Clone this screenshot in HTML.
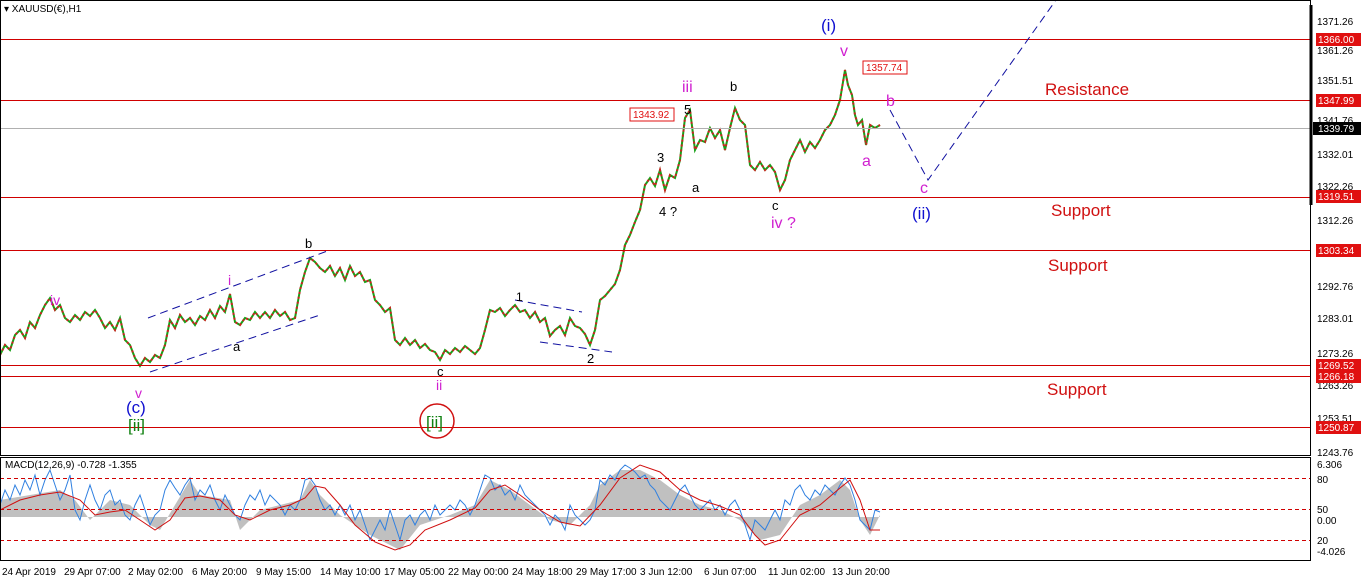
<!DOCTYPE html>
<html><head><meta charset="utf-8"><style>
html,body{margin:0;padding:0;background:#fff;width:1362px;height:582px;overflow:hidden}
svg{display:block;font-family:"Liberation Sans",sans-serif}
</style></head><body>
<svg width="1362" height="582" xmlns="http://www.w3.org/2000/svg">
<rect width="1362" height="582" fill="#fff"/>
<defs>
<polyline id="pr" fill="none" points="0,355 5,345 10,350 15,335 20,330 25,338 30,322 35,328 40,315 45,305 50,298 55,310 60,305 65,318 70,322 75,315 80,320 85,312 90,316 95,310 100,318 105,328 110,322 115,330 120,318 125,340 130,345 135,358 140,366 145,358 150,362 155,355 160,358 165,345 170,320 175,328 180,315 185,322 190,318 195,325 200,316 205,320 210,310 215,318 220,306 225,312 230,294 235,322 240,325 245,318 250,320 255,312 260,318 265,312 270,318 275,310 280,316 285,312 290,320 295,318 300,290 305,272 310,258 315,262 320,268 325,272 330,266 335,276 340,268 345,280 350,266 355,276 360,272 365,282 370,280 375,300 380,305 385,312 390,308 395,340 400,345 405,338 410,345 415,340 420,348 425,344 430,350 435,352 440,360 445,350 450,354 455,348 460,352 465,346 470,350 475,354 480,348 485,330 490,310 495,312 500,308 505,316 510,310 515,305 520,312 525,310 530,318 535,312 540,322 545,318 550,336 555,330 560,326 565,335 570,318 575,326 580,328 585,334 590,345 595,330 600,300 605,296 610,290 615,284 620,270 625,245 630,235 635,222 640,210 645,185 650,178 655,186 660,170 665,190 670,175 675,178 680,160 685,118 690,110 695,150 700,140 705,142 710,128 715,138 720,130 725,150 730,128 735,108 740,120 745,125 750,165 755,170 760,162 765,170 770,165 775,172 780,190 785,180 790,160 795,150 800,140 805,152 810,142 815,148 820,140 825,130 830,125 835,115 840,100 845,70 848,85 852,95 855,115 858,125 862,120 866,145 870,125 875,128 880,125"/>
</defs>
<use href="#pr" stroke="#18a018" stroke-width="2"/>
<use href="#pr" stroke="#d02020" stroke-width="2" stroke-dasharray="2,3"/>
<g fill="#d00000">
<rect x="0" y="39" width="1311" height="1"/><rect x="0" y="100" width="1311" height="1"/>
<rect x="0" y="197" width="1311" height="1"/><rect x="0" y="250" width="1311" height="1"/>
<rect x="0" y="365" width="1311" height="1"/><rect x="0" y="376" width="1311" height="1"/>
<rect x="0" y="427" width="1311" height="1"/>
</g>
<rect x="0" y="128" width="1311" height="1" fill="#b0b0b0"/>
<g stroke="#1010a0" stroke-width="1" stroke-dasharray="8,5" fill="none">
<line x1="148" y1="318" x2="330" y2="250"/><line x1="150" y1="372" x2="320" y2="315"/>
<line x1="515" y1="300" x2="582" y2="312"/><line x1="540" y1="342" x2="612" y2="352"/>
<polyline points="890,110 928,180 1056,0"/>
</g>
<path fill="#c0c0c0" d="M0,517 L0,500 30,495 60,490 75,500 90,520 110,500 130,505 150,525 160,530 175,505 190,480 200,495 230,500 240,530 260,510 280,505 300,500 310,480 320,495 340,515 370,535 400,550 420,525 450,515 475,505 490,480 510,490 530,505 550,520 570,525 590,505 600,485 620,470 640,470 660,480 680,495 700,505 720,510 740,520 760,540 780,535 800,505 820,495 840,480 850,490 860,520 870,535 880,515 880,517 Z"/>
<polyline fill="none" stroke="#3080e0" stroke-width="1" points="0,505 5,490 10,500 15,485 20,495 25,480 30,490 35,475 40,495 45,480 50,470 55,485 60,500 65,490 70,475 75,510 80,520 85,500 90,485 95,500 100,510 105,495 110,490 115,505 120,500 125,515 130,520 135,505 140,495 145,510 150,525 155,515 160,510 165,490 170,480 175,488 180,495 185,485 190,478 195,500 200,490 205,495 210,485 215,500 220,510 225,495 230,505 235,515 240,520 245,505 250,495 255,500 260,490 265,505 270,495 275,500 280,505 285,515 290,505 295,510 300,500 305,480 310,478 315,485 320,500 325,510 330,505 335,515 340,505 345,515 350,505 355,520 360,510 365,525 370,540 375,530 380,520 385,530 390,510 395,525 400,540 405,520 410,515 415,525 420,515 425,510 430,520 435,505 440,515 445,510 450,505 455,510 460,500 465,505 470,515 475,505 480,490 485,475 490,478 495,490 500,485 505,495 510,490 515,500 520,485 525,495 530,500 535,505 540,510 545,515 550,525 555,515 560,520 565,530 570,505 575,515 580,520 585,525 590,520 595,510 600,480 605,485 610,475 615,480 620,470 625,465 630,468 635,472 640,478 645,475 650,485 655,490 660,500 665,505 670,510 675,500 680,490 685,485 690,495 695,505 700,510 705,505 710,500 715,510 720,505 725,515 730,505 735,500 740,510 745,525 750,540 755,520 760,525 765,530 770,520 775,510 780,520 785,500 790,505 795,490 800,485 805,495 810,500 815,490 820,495 825,485 830,490 835,495 840,485 845,478 850,485 855,500 860,520 865,525 870,530 875,510 880,512"/>
<polyline fill="none" stroke="#d01010" stroke-width="1" points="0,510 20,500 40,495 60,492 80,500 95,515 110,512 125,510 140,520 155,530 170,520 185,498 200,496 220,500 235,515 250,520 270,510 290,505 305,498 315,486 325,488 340,505 355,525 375,542 395,550 410,545 425,530 450,520 475,508 490,490 505,485 520,495 540,510 560,522 580,526 600,505 620,478 640,465 660,472 680,490 700,500 720,506 740,515 755,535 765,545 780,540 800,515 820,505 840,488 850,480 860,500 870,530 880,530"/>
<g fill="none" stroke="#d00000" stroke-dasharray="4,3"><path d="M0,478.5H1311M0,509.5H1311M0,540.5H1311"/></g>
<rect x="0.5" y="0.5" width="1310" height="455" fill="none" stroke="#000"/>
<rect x="0.5" y="457.5" width="1310" height="103" fill="none" stroke="#000"/>
<line x1="1311" y1="5" x2="1311" y2="205" stroke="#000" stroke-width="3"/>
<g font-size="10" fill="#000">
<text x="1317" y="25">1371.26</text><text x="1317" y="54">1361.26</text><text x="1317" y="84">1351.51</text>
<text x="1317" y="124">1341.76</text><text x="1317" y="158">1332.01</text><text x="1317" y="190">1322.26</text>
<text x="1317" y="224">1312.26</text><text x="1317" y="290">1292.76</text><text x="1317" y="322">1283.01</text>
<text x="1317" y="357">1273.26</text><text x="1317" y="389">1263.26</text><text x="1317" y="422">1253.51</text>
<text x="1317" y="456">1243.76</text>
<text x="1317" y="468">6.306</text><text x="1317" y="483">80</text><text x="1317" y="513">50</text><text x="1317" y="524">0.00</text>
<text x="1317" y="544">20</text><text x="1317" y="555">-4.026</text>
</g>
<g font-size="10" fill="#fff">
<rect x="1316" y="33" width="45" height="13" fill="#e01010"/><text x="1318" y="43">1366.00</text>
<rect x="1316" y="94" width="45" height="13" fill="#e01010"/><text x="1318" y="104">1347.99</text>
<rect x="1313" y="122" width="48" height="13" fill="#000"/><text x="1318" y="132">1339.79</text>
<rect x="1316" y="190" width="45" height="13" fill="#e01010"/><text x="1318" y="200">1319.51</text>
<rect x="1316" y="244" width="45" height="13" fill="#e01010"/><text x="1318" y="254">1303.34</text>
<rect x="1316" y="359" width="45" height="13" fill="#e01010"/><text x="1318" y="369">1269.52</text>
<rect x="1316" y="370" width="45" height="13" fill="#e01010"/><text x="1318" y="380">1266.18</text>
<rect x="1316" y="421" width="45" height="13" fill="#e01010"/><text x="1318" y="431">1250.87</text>
</g>
<g font-size="10" fill="#000">
<text x="4" y="12">▾ XAUUSD(€),H1</text>
<text x="5" y="468">MACD(12,26,9) -0.728 -1.355</text>
<text x="2" y="575">24 Apr 2019</text><text x="64" y="575">29 Apr 07:00</text><text x="128" y="575">2 May 02:00</text>
<text x="192" y="575">6 May 20:00</text><text x="256" y="575">9 May 15:00</text><text x="320" y="575">14 May 10:00</text>
<text x="384" y="575">17 May 05:00</text><text x="448" y="575">22 May 00:00</text><text x="512" y="575">24 May 18:00</text>
<text x="576" y="575">29 May 17:00</text><text x="640" y="575">3 Jun 12:00</text><text x="704" y="575">6 Jun 07:00</text>
<text x="768" y="575">11 Jun 02:00</text><text x="832" y="575">13 Jun 20:00</text>
</g>
<g font-size="10" fill="#e01010">
<rect x="630" y="108" width="44" height="13" fill="#fff" stroke="#e01010"/><text x="633" y="118">1343.92</text>
<rect x="863" y="61" width="44" height="13" fill="#fff" stroke="#e01010"/><text x="866" y="71">1357.74</text>
</g>
<g font-size="17" fill="#d01010"><text x="1045" y="95">Resistance</text><text x="1051" y="216">Support</text><text x="1048" y="271">Support</text><text x="1047" y="395">Support</text></g>
<g font-size="14">
<text x="50" y="305" fill="#d020d0">iv</text><text x="228" y="285" fill="#d020d0">i</text>
<text x="135" y="398" fill="#d020d0">v</text><text x="126" y="413" fill="#1010d0" font-size="17">(c)</text>
<text x="128" y="431" fill="#108010" font-size="17">[ii]</text>
<text x="305" y="248" fill="#000" font-size="13">b</text><text x="233" y="351" fill="#000" font-size="13">a</text>
<text x="437" y="376" fill="#000" font-size="13">c</text><text x="436" y="390" fill="#d020d0">ii</text>
<circle cx="437" cy="421" r="17" fill="none" stroke="#d01010" stroke-width="1.5"/>
<text x="426" y="428" fill="#108010" font-size="17">[ii]</text>
<text x="516" y="301" fill="#000" font-size="12">1</text><text x="587" y="363" fill="#000" font-size="13">2</text>
<text x="657" y="162" fill="#000" font-size="13">3</text><text x="659" y="216" fill="#000" font-size="13">4 ?</text>
<text x="684" y="114" fill="#000" font-size="13">5</text><text x="682" y="92" fill="#d020d0" font-size="16">iii</text>
<text x="692" y="192" fill="#000" font-size="13">a</text><text x="730" y="91" fill="#000" font-size="13">b</text>
<text x="772" y="210" fill="#000" font-size="13">c</text><text x="771" y="228" fill="#d020d0" font-size="16">iv ?</text>
<text x="821" y="31" fill="#1010d0" font-size="17">(i)</text><text x="840" y="56" fill="#d020d0" font-size="16">v</text>
<text x="886" y="106" fill="#d020d0" font-size="16">b</text><text x="862" y="166" fill="#d020d0" font-size="16">a</text>
<text x="920" y="193" fill="#d020d0" font-size="16">c</text><text x="912" y="219" fill="#1010d0" font-size="17">(ii)</text>
</g>
</svg>
</body></html>
